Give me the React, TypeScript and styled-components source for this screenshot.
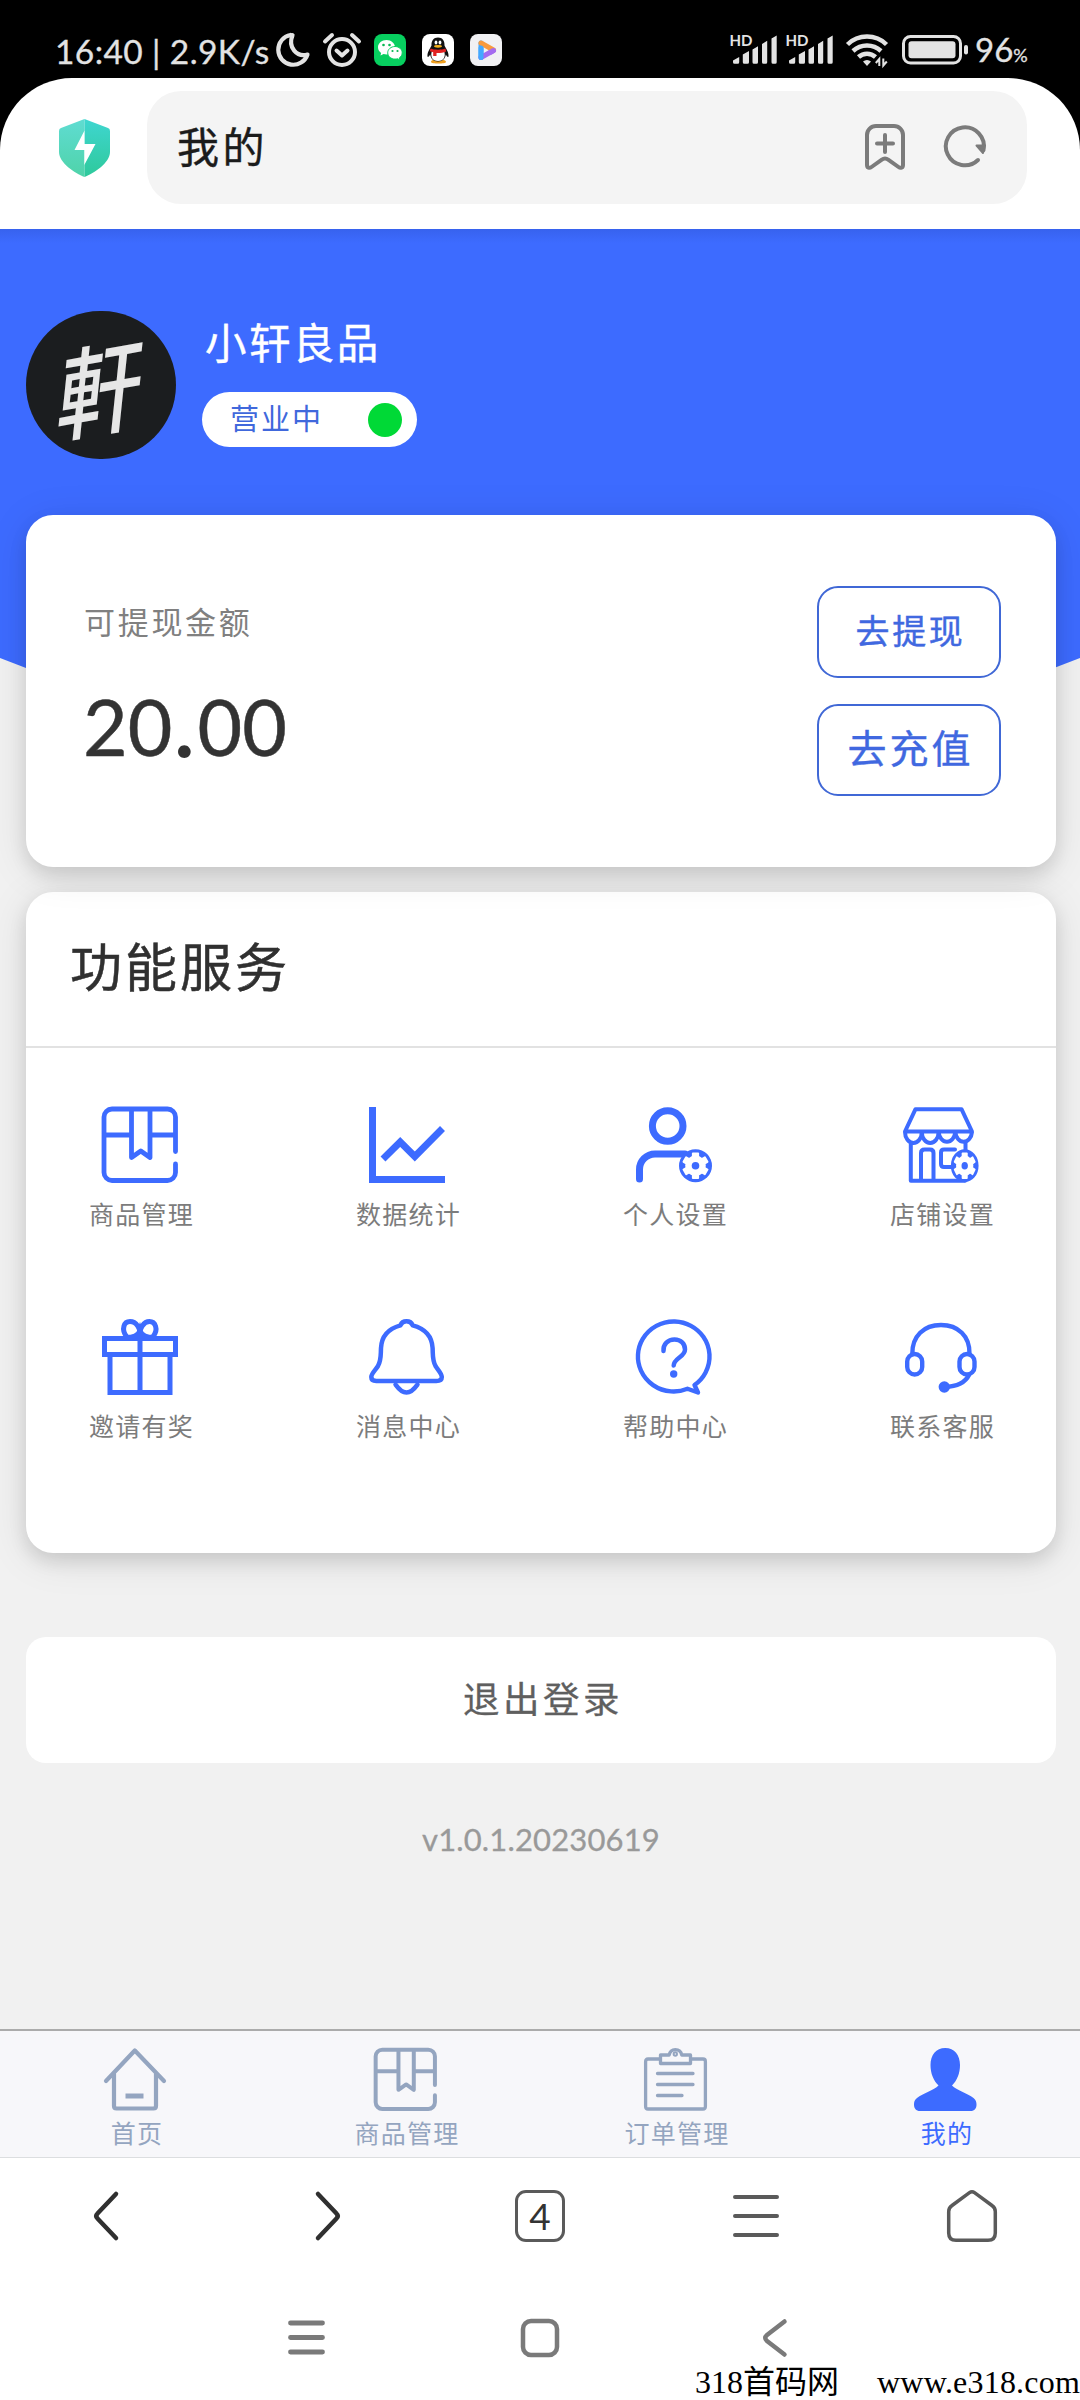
import React from "react";
import styled, { createGlobalStyle, css } from "styled-components";

const BLUE = "#3d6bff";
const MUTED = "#94a5c0";

const GlobalStyle = createGlobalStyle`
  * { box-sizing: border-box; }
  body {
    margin: 0;
    background: #f1f1f1;
    font-family: Lato, "Noto Sans CJK SC", sans-serif;
  }
  svg { display: block; flex: none; overflow: visible; }
`;

const Screen = styled.div`
  width: 1080px;
  height: 2400px;
  display: flex;
  flex-direction: column;
  overflow: hidden;
  background: #f1f1f1;
`;

/* Single-line text with fixed tracking and line box */
const tracked = (size: number, spacing: number, line: number) => css`
  font-size: ${size}px;
  letter-spacing: ${spacing}px;
  line-height: ${line}px;
  white-space: nowrap;
`;

/* ---------- System status bar ---------- */
const StatusBar = styled.div`
  height: 78px;
  flex: none;
  background: #000;
  color: #e3e3e3;
  display: flex;
  justify-content: space-between;
  padding: 30px 54px 8px 55px;
`;
const StatusGroup = styled.div<{ $gap: number }>`
  display: flex;
  align-items: center;
  gap: ${(p) => p.$gap}px;
  height: 40px;
`;
const StatusText = styled.span`
  ${tracked(33.5, 0.4, 40)}
  width: 218px;
  margin-right: 4px;
  padding-top: 1px;
  -webkit-text-stroke: 0.3px currentColor;
`;
const StatusSignal = styled.div<{ $after: number }>`
  display: flex;
  width: 46px;
  margin-right: ${(p) => p.$after}px;
`;
const BatteryText = styled.span`
  ${tracked(33, 0, 40)}
  width: 51px;
  margin-left: 7px;
  padding-top: 3px;
  -webkit-text-stroke: 0.3px currentColor;
  small { font-size: 18px; }
`;
const AppBadge = styled.div<{ $bg: string }>`
  width: 32px;
  height: 32px;
  border-radius: 8px;
  background: ${(p) => p.$bg};
`;

/* ---------- Browser header ---------- */
const HeaderBack = styled.div`
  background: #000;
  flex: none;
`;
const Header = styled.header`
  height: 151px;
  background: #fff;
  border-radius: 72px 72px 0 0;
  display: flex;
  align-items: flex-start;
  padding: 13px 53px 0 59px;
`;
const ShieldSlot = styled.div`
  width: 88px;
  padding-top: 28px;
`;
const AddressBar = styled.div`
  flex: 1;
  height: 113px;
  border-radius: 34px;
  background: #f4f4f4;
  display: flex;
  align-items: center;
  padding: 0 40px 2px 30px;
`;
const PageTitle = styled.div`
  ${tracked(42, 3.5, 60)}
  flex: 1;
  color: #1b1b1b;
  -webkit-text-stroke: 0.4px currentColor;
`;
const AddressIcons = styled.div`
  display: flex;
  gap: 39px;
`;

/* ---------- Store profile ---------- */
const Page = styled.main`
  height: 1800px;
  flex: none;
`;
const Hero = styled.section`
  height: 440px;
  margin-bottom: -154px;
  background: linear-gradient(#3762ee, ${BLUE} 14px);
  clip-path: polygon(0 0, 100% 0, 100% 429px, 1054px 439px, 26px 439px, 0 429px);
  display: flex;
  gap: 26px;
  padding: 82px 26px 0;
`;
const Avatar = styled.div`
  width: 150px;
  height: 148px;
  border-radius: 75px;
  background: #1b1d1f;
  display: flex;
  align-items: center;
  justify-content: center;
`;
const AvatarMark = styled.span`
  font-family: "Noto Sans CJK TC", sans-serif;
  font-size: 84px;
  font-weight: 500;
  line-height: 100px;
  color: #e6e6e6;
  transform: skew(-6deg, -10deg) scaleY(1.2);
`;
const StoreInfo = styled.div`
  display: flex;
  flex-direction: column;
  align-items: flex-start;
`;
const StoreName = styled.h1`
  ${tracked(41.5, 2.4, 60)}
  margin: 2px 0 19px 3px;
  font-weight: 400;
  color: #fff;
  -webkit-text-stroke: 0.4px currentColor;
`;
const OpenState = styled.div`
  width: 215px;
  height: 55px;
  border-radius: 28px;
  background: #fff;
  display: flex;
  align-items: center;
  justify-content: space-between;
  padding: 0 15px 0 28px;
  color: #4068dc;
  ${tracked(29, 2, 50)}
`;
const StateLabel = styled.span`
  padding-bottom: 2px;
`;
const StateDot = styled.i`
  width: 34px;
  height: 34px;
  border-radius: 50%;
  background: #00d936;
`;

/* ---------- Cards ---------- */
const cardBox = css`
  margin: 0 24px 0 26px;
  border-radius: 27px;
  background: #fff;
  box-shadow: 0 8px 18px rgba(0, 0, 0, 0.11), 0 6px 42px rgba(0, 0, 0, 0.1);
`;
const BalanceCard = styled.section`
  ${cardBox}
  position: relative;
  height: 352px;
  display: flex;
  justify-content: space-between;
  padding: 71px 55px 0 57px;
`;
const BalanceInfo = styled.div`
  padding-top: 11px;
`;
const BalanceLabel = styled.div`
  ${tracked(31, 2.7, 50)}
  margin-left: 1px;
  color: #808080;
`;
const BalanceAmount = styled.div`
  ${tracked(77, 0, 90)}
  margin-top: 34px;
  color: #333;
  -webkit-text-stroke: 0.5px currentColor;
`;
const AmountPoint = styled.span`
  letter-spacing: 4px;
  margin-left: 3px;
  -webkit-text-stroke: 3px currentColor;
`;
const ButtonColumn = styled.div`
  display: flex;
  flex-direction: column;
  gap: 26px;
`;
const OutlineButton = styled.button<{ $large?: boolean }>`
  width: 184px;
  height: 92px;
  padding: 0 0 ${(p) => (p.$large ? 5 : 3)}px;
  border: 2px solid #4068d6;
  border-radius: 21px;
  background: #fff;
  color: #4068e0;
  font-family: inherit;
  ${(p) => (p.$large ? tracked(39, 3, 80) : tracked(34, 2.6, 80))}
  text-indent: 3px;
  -webkit-text-stroke: 0.4px currentColor;
`;
const ServiceCard = styled.section`
  ${cardBox}
  margin-top: 25px;
  height: 661px;
`;
const ServiceTitle = styled.h2`
  ${tracked(52, 3, 80)}
  height: 156px;
  margin: 0;
  padding: 35px 0 0 44px;
  border-bottom: 2px solid #e2e2e2;
  font-weight: 400;
  color: #303030;
  -webkit-text-stroke: 0.5px currentColor;
`;
const ServiceGrid = styled.div`
  display: grid;
  grid-template-columns: repeat(4, 267px);
  grid-auto-rows: 212px;
  width: 1030px;
  padding-top: 59px;
  margin-left: -19.5px;
`;
const ServiceItem = styled.div`
  display: flex;
  flex-direction: column;
  align-items: center;
`;
const ServiceLabel = styled.div`
  ${tracked(25, 1.2, 36)}
  margin-top: 13px;
  text-indent: 3px;
  color: #7c7c7c;
`;
const LogoutButton = styled.button`
  display: block;
  width: 1030px;
  height: 126px;
  margin: 84px 0 0 26px;
  padding: 0 0 3px;
  border: 0;
  border-radius: 20px;
  background: #fff;
  color: #5f5f5f;
  font-family: inherit;
  ${tracked(36.5, 3.5, 100)}
  text-indent: 4px;
  -webkit-text-stroke: 0.3px currentColor;
`;
const Version = styled.div`
  ${tracked(31, 0.15, 40)}
  margin-top: 56px;
  text-align: center;
  text-indent: 2px;
  color: #999;
  -webkit-text-stroke: 0.3px currentColor;
`;

/* ---------- App tab bar ---------- */
const TabBar = styled.nav`
  height: 129px;
  flex: none;
  border-top: 2px solid #ababab;
  border-bottom: 1px solid #dcdee0;
  background: #f7f7fa;
  display: flex;
`;
const Tab = styled.div<{ $active?: boolean }>`
  flex: 1;
  display: flex;
  flex-direction: column;
  align-items: center;
  padding-top: 17px;
  color: ${(p) => (p.$active ? BLUE : MUTED)};
`;
const TabLabel = styled.div`
  ${tracked(25, 1.2, 36)}
  margin-top: 4px;
  text-indent: 4px;
`;

/* ---------- Browser and system navigation ---------- */
const BrowserBar = styled.nav`
  height: 118px;
  flex: none;
  background: #fff;
  display: grid;
  grid-template-columns: repeat(5, 216px);
  padding-bottom: 3px;
`;
const BrowserAction = styled.div<{ $before?: number; $after?: number }>`
  display: flex;
  align-items: center;
  justify-content: center;
  padding: 0 ${(p) => p.$after ?? 0}px 0 ${(p) => p.$before ?? 0}px;
`;
const TabCount = styled.div`
  width: 50px;
  height: 52px;
  border: 3px solid #5a5a5a;
  border-radius: 11px;
  display: flex;
  justify-content: center;
  font-size: 37px;
  line-height: 46px;
  color: #333;
`;
const SystemNav = styled.nav`
  height: 90px;
  flex: none;
  background: #fff;
  display: flex;
  align-items: center;
  padding: 33px 0 0 288px;
`;
const SystemHomeSlot = styled.div`
  margin: 0 204px 0 196px;
`;
const Footer = styled.footer`
  height: 34px;
  flex: none;
  background: #fff;
  color: #000;
  display: flex;
  justify-content: space-between;
  padding-left: 695px;
  font-family: "Liberation Serif", "Noto Sans CJK SC", serif;
  font-size: 32px;
  line-height: 32px;
  white-space: nowrap;
`;
const SiteUrl = styled.span`
  letter-spacing: 0.2px;
`;

/* ---------- Icons ---------- */
const stroke = (w: number) =>
  ({ fill: "none", stroke: "currentColor", strokeWidth: w, strokeLinecap: "round", strokeLinejoin: "round" }) as const;

const Moon = () => (
  <svg width="33" height="34" viewBox="0 0 33 34" {...stroke(4.2)}>
    <path d="M13.5 2A15 15 0 1 0 30.5 21.5C20 24.5 10.5 14.5 15.5 2.2" />
  </svg>
);
const Alarm = () => (
  <svg width="38" height="34" viewBox="0 0 38 34" {...stroke(4)}>
    <circle cx="19" cy="19" r="13" />
    <path d="m13.5 17.5 5.5 5 5.5-5M2 8.5 9 2M36 8.5 29 2" />
  </svg>
);
const WeChat = () => (
  <svg width="32" height="32" viewBox="0 0 32 32">
    <path d="M12.5 6C7.800 6 4 9.200 4 13.300c0 2.300 1.200 4.200 3.100 5.600L6.500 21.500l3-1.500c1 .3 2 .4 3 .4C17 20.400 21 17.300 21 13.300S17.200 6 12.500 6Z" fill="#fff" />
    <path d="M21 12.500c-4 0-7.300 2.800-7.300 6.300s3.200 6.300 7.300 6.300c.9 0 1.700-.1 2.500-.4l2.500 1.300-.6-2.200c1.700-1.200 2.800-3 2.800-5 0-3.500-3.200-6.300-7.200-6.300Z" fill="#fff" stroke="#07cf5f" />
    <g fill="#07b853"><circle cx="9.500" cy="11" r="1.300" /><circle cx="15.500" cy="11" r="1.300" /><circle cx="18.500" cy="17" r="1.100" /><circle cx="23.500" cy="17" r="1.100" /></g>
  </svg>
);
const Penguin = () => (
  <svg width="32" height="32" viewBox="0 0 32 32">
    <path d="M9 28c0-2 3-2.500 7-2.500s8 .5 8 2.500-15 2-15 0Z" fill="#f0a020" />
    <path d="M16 3.500c-4.500 0-6.700 3.300-6.500 8-1.500 3-4.500 7-4 11 .3 1 1.700 0 2.700-2 .5 4 3 7 7.800 7s7.300-3 7.800-7c1 2 2.400 3 2.700 2 .5-4-2.500-8-4-11 .2-4.700-2-8-6.500-8Z" fill="#111" />
    <path d="M10 17h12c2 5 0 10-6 10s-8-5-6-10Z" fill="#fff" />
    <path d="M8.500 14.500c4 1.600 11 1.600 15 0l.7 3c-3 1.200-6.200 1.600-9.700 1.500V22h-3.300v-3.800l-3.500-.9Z" fill="#e02222" />
    <ellipse cx="14" cy="8.500" rx="1.400" ry="2" fill="#fff" /><ellipse cx="18" cy="8.500" rx="1.400" ry="2" fill="#fff" />
    <ellipse cx="16" cy="12.300" rx="4" ry="1.400" fill="#f5b21b" />
  </svg>
);
const PlayMark = () => (
  <svg width="32" height="32" viewBox="0 0 32 32" fill="none" strokeWidth="5" strokeLinejoin="round" strokeLinecap="round">
    <path d="M11 23.500V9" stroke="#43a8ff" />
    <path d="M11 23.500 23.500 16.500" stroke="#a46bf0" />
    <path d="M11 9l12.500 7" stroke="#f89a3c" />
    <path d="M20.500 18.200l3-1.700" stroke="#a46bf0" />
    <path d="M11 23.500V14" stroke="#43a8ff" />
  </svg>
);
const Signal = () => (
  <svg width="46" height="30" viewBox="0 0 46 30" fill="#e3e3e3">
    <text x="-1.500" y="11" fontFamily="Lato, sans-serif" fontSize="15.500" fontWeight="700" textLength="23" lengthAdjust="spacingAndGlyphs">HD</text>
    <path d="M2 25.500 8.200 22v5.300a1.500 1.500 0 0 1-1.500 1.500H3.500A1.500 1.500 0 0 1 2 27.300ZM11.800 19.500 18 16v11.300a1.500 1.500 0 0 1-1.500 1.500h-3.200a1.500 1.500 0 0 1-1.500-1.500ZM21.500 14.500l5.500-3.300v16.100a1.500 1.500 0 0 1-1.500 1.500H23a1.500 1.500 0 0 1-1.500-1.500ZM31 9l5.200-3.200v21.500a1.500 1.500 0 0 1-1.500 1.500h-2.200a1.500 1.500 0 0 1-1.500-1.500ZM40.500 3.500 45.700.5v26.800a1.500 1.500 0 0 1-1.500 1.500H42a1.500 1.500 0 0 1-1.500-1.500Z" />
  </svg>
);
const Wifi = () => (
  <svg width="42" height="33" viewBox="0 0 42 33" fill="none" stroke="currentColor" strokeWidth="4.500">
    <path d="M1.500 10.500a28 28 0 0 1 39 0" /><path d="M7 17a20.500 20.500 0 0 1 28 0" /><path d="M12.500 23a12.500 12.500 0 0 1 17 0" />
    <path d="M17 27.500a6 6 0 0 1 8 0L21 32Z" fill="currentColor" stroke="none" />
    <path d="M33.300 32v-7l-3.500 4M37.300 24.500v7l3.500-4" strokeWidth="2" />
  </svg>
);
const Battery = () => (
  <svg width="66" height="30" viewBox="0 0 66 30">
    <rect x="1.500" y="1.500" width="57" height="26.500" rx="7" fill="none" stroke="#e3e3e3" strokeWidth="3" />
    <rect x="6.500" y="6.200" width="47" height="17" rx="3" fill="#e3e3e3" />
    <rect x="62" y="10" width="4" height="9.500" rx="2" fill="#e3e3e3" />
  </svg>
);
const Shield = () => (
  <svg width="51" height="58" viewBox="0 0 51 58">
    <defs>
      <linearGradient id="shieldL" x1="0" y1="0" x2="0" y2="1"><stop offset="0" stopColor="#5fdcd2" /><stop offset="1" stopColor="#4fd3a9" /></linearGradient>
      <linearGradient id="shieldR" x1="0" y1="0" x2="0" y2="1"><stop offset="0" stopColor="#3fd6d0" /><stop offset="1" stopColor="#2ec99b" /></linearGradient>
    </defs>
    <path d="M25.500 0 2 9Q0 9.500 0 12v21C0 44 16 54 25.500 58Z" fill="url(#shieldL)" />
    <path d="M25.500 0 49 9q2 .5 2 3v21c0 11-16 21-25.500 25Z" fill="url(#shieldR)" />
    <path d="M25.500 11.500 15.500 31h9.800v15L36.500 25H25.500Z" fill="#fff" />
  </svg>
);
const BookmarkAdd = () => (
  <svg width="40" height="46" viewBox="0 0 40 46" {...stroke(4)} stroke="#7b7b7b">
    <path d="M11 2h18a9 9 0 0 1 9 9v30c0 3-2.500 3.500-4.500 2l-10-7.200a6 6 0 0 0-7 0L6.500 43C4.500 44.500 2 44 2 41V11a9 9 0 0 1 9-9Z" />
    <path d="M12 19.500h16M20 11v17" />
  </svg>
);
const Refresh = () => (
  <svg width="43" height="43" viewBox="0 0 43 43" {...stroke(4)} stroke="#7b7b7b">
    <path d="M34 36A19 19 0 1 1 39.500 26" />
    <path d="M32.500 21.500h8.500L39 29Z" fill="#7b7b7b" strokeWidth="2" />
  </svg>
);

const Package = ({ size, w }: { size: number; w: number }) => (
  <svg width={size} height={size} viewBox="0 0 76 76" {...stroke(w)}>
    <path d="M73.500 44.500V10a8 8 0 0 0-8-8H10a8 8 0 0 0-8 8v55.500a8 8 0 0 0 8 8h55.500a8 8 0 0 0 8-8V57M2 28h27.500M48 28h25.500M29.500 2v48.500l9.300-6.500 9.200 6.500V2" />
  </svg>
);
const LineChart = () => (
  <svg width="76" height="76" viewBox="0 0 76 76" fill="none" stroke="currentColor" strokeWidth="7">
    <path d="M3.500 0v72.500H76M14 52l17.200-17 14.600 14.500L73.500 21.500" />
  </svg>
);
const Gear = ({ x, y, sx = 1 }: { x: number; y: number; sx?: number }) => (
  <g transform={`translate(${x} ${y}) scale(${sx} 1)`} stroke="none">
    <circle r="16.500" fill="currentColor" />
    <circle r="10.300" fill="#fff" />
    {[0, 60, 120].map((a) => (
      <rect key={a} x="-3.600" y="-13.300" width="7.200" height="26.600" rx="1" fill="#fff" transform={`rotate(${a})`} />
    ))}
    <circle r="3.800" fill="currentColor" />
  </g>
);
const UserSettings = () => (
  <svg width="76" height="76" viewBox="0 0 76 76" {...stroke(7)}>
    <circle cx="31.700" cy="19" r="15.300" />
    <path d="M3.500 72V62.500A15.500 15.500 0 0 1 19 47h30" />
    <Gear x={59.5} y={58.700} />
  </svg>
);
const StoreSettings = () => (
  <svg width="76" height="76" viewBox="0 0 76 76" {...stroke(4)}>
    <path d="M2 24.500 12.500 2.200h46L69 24.500ZM2 25a8.400 11 0 0 0 16.800 0 8.400 11 0 0 0 16.800 0 8.400 11 0 0 0 16.700 0A8.400 11 0 0 0 69 25M7.800 36v37.700H62M62.500 36v8M18 73V46q0-3.500 3.500-3.500h5.500q3.500 0 3.500 3.500v27M52 42.500H41q-3 0-3 3V57q0 3 3 3h9" />
    <Gear x={61.7} y={58.700} sx={0.84} />
  </svg>
);
const Gift = () => (
  <svg width="76" height="76" viewBox="0 0 76 76" {...stroke(5)} strokeLinejoin="miter">
    <path d="M2.500 19.500h71v16h-71ZM8 36v37.500h60V36M38 19.500v54" />
    <path d="M38 17.500C39 9 34 2.500 28 2.500S19 10 24.500 17.500M38 17.500C37 9 42 2.500 47.500 2.500S57 10 51 17.500M24.500 17.500c6 2 12-1 13.500-6 1.500 5 7.500 8 13 6" />
  </svg>
);
const Bell = () => (
  <svg width="76" height="76" viewBox="0 0 76 76" {...stroke(4.500)}>
    <path d="M37.500 2.300c-3 0-5 1.200-6 4C20 9.500 12.500 17 12 29c-.4 8 .3 12-3 18C6.500 51 2.300 54.500 2.300 58c0 3 2 4 5 4h60c3.500 0 5.500-1 5.500-4 0-3.500-3.800-7-6.300-11-3.200-6-2.500-10-2.900-18-.6-12-8.100-19.500-20-22.700-1-2.800-3-4-6.100-4Z" />
    <path d="M26.500 65.500C29 69 32 73.500 37.500 73.500S46 69 48.500 65.500" />
  </svg>
);
const Help = () => (
  <svg width="76" height="76" viewBox="0 0 76 76" {...stroke(4.400)}>
    <path d="M58.500 66A35.800 35 0 1 0 51.500 69.800L62 73.500Z" />
    <path d="M27.500 32C27 25 32 20.500 38.500 20.500S49 25 49 30.500C49 38 38 39 37.700 46.500" strokeWidth="4.500" />
    <circle cx="37.700" cy="55" r="3.700" fill="currentColor" stroke="none" />
  </svg>
);
const Headset = () => (
  <svg width="76" height="76" viewBox="0 0 76 76" {...stroke(4.400)}>
    <path d="M9.300 35C9 17 21 6 38 6s29 11 28.500 29M66 56c-4 8-12 11.500-24 12" />
    <rect x="4.200" y="35" width="15" height="20.500" rx="7.500" />
    <rect x="56.500" y="35" width="15" height="20.500" rx="7.500" />
    <circle cx="41.300" cy="68" r="5.700" fill="currentColor" stroke="none" />
  </svg>
);
const HomeTab = () => (
  <svg width="62" height="63" viewBox="0 0 62 63" {...stroke(4.200)}>
    <path d="M2 33 30.800 2.500 60 33M10 26v32q0 2.500 2.500 2.500h37q2.500 0 2.500-2.500V26" />
    <path d="M21.500 48h18" strokeWidth="5" strokeLinecap="butt" />
  </svg>
);
const Clipboard = () => (
  <svg width="63" height="63" viewBox="0 0 63 63" {...stroke(3.300)}>
    <path d="M16 11H4q-2.400 0-2.400 2.500v45Q1.600 61 4 61h55q2.400 0 2.400-2.500v-45Q61.400 11 59 11H47" />
    <path d="M16.500 7h8.700C26 3 28 1.600 31.300 1.600S37 3 37.700 7h8.800v8.500h-30ZM13.500 25.500H49M13.500 36.500H49M13.500 47.500H38" />
    <circle cx="31.300" cy="6" r="1" />
  </svg>
);
const Person = () => (
  <svg width="63" height="63" viewBox="0 0 63 63" fill="currentColor">
    <path d="M31.200 0C22 0 16.500 7 16.500 17c0 8.500 3 15.500 8 20.500C20 42 9 45.500 3 50c-2.500 2-3 4-3 6.500C0 60.500 2 63 6 63h50.500c4 0 6-2.500 6-6.500 0-2.500-.6-4.500-3-6.500-6-4.500-17-8-21.500-12.500 5-5 8-12 8-20.500C46 7 40.500 0 31.200 0Z" />
  </svg>
);
const Chevron = ({ flip }: { flip?: boolean }) => (
  <svg width="24" height="48" viewBox="0 0 24 48" {...stroke(4.500)} stroke="#303030">
    <path d={flip ? "M2 2 20.500 21.500q2.500 2.500 0 5L2 46" : "M22 2 3.500 21.500q-2.500 2.500 0 5L22 46"} />
  </svg>
);
const BrowserMenu = () => (
  <svg width="46" height="42" viewBox="0 0 46 42" {...stroke(4)} stroke="#5a5a5a">
    <path d="M2 2h42M2 21h42M2 40h42" />
  </svg>
);
const BrowserHome = () => (
  <svg width="50" height="52" viewBox="0 0 50 52" {...stroke(3.500)} stroke="#5a5a5a">
    <path d="M22.500 2.700 5 15.500q-3.300 2.300-3.300 6V43q0 7.300 7.300 7.300h32q7.300 0 7.300-7.300V21.500q0-3.700-3.300-6L27.500 2.700q-2.500-1.800-5 0Z" />
  </svg>
);
const SysMenu = () => (
  <svg width="37" height="35" viewBox="0 0 37 35" {...stroke(4.800)} stroke="#7a7a7a">
    <path d="M2.500 3h32M2.500 17.500h32M2.500 32h32" />
  </svg>
);
const SysHome = () => (
  <svg width="38" height="38" viewBox="0 0 38 38" {...stroke(4.500)} stroke="#7a7a7a">
    <rect x="2" y="2" width="34" height="34" rx="8" />
  </svg>
);
const SysBack = () => (
  <svg width="24" height="38" viewBox="0 0 24 38" {...stroke(4.500)} stroke="#7a7a7a">
    <path d="M21.500 2.500 4 16q-3.500 3 0 6l17.500 13.500" />
  </svg>
);

const services = [
  { label: "商品管理", icon: <Package size={76} w={4.800} /> },
  { label: "数据统计", icon: <LineChart /> },
  { label: "个人设置", icon: <UserSettings /> },
  { label: "店铺设置", icon: <StoreSettings /> },
  { label: "邀请有奖", icon: <Gift /> },
  { label: "消息中心", icon: <Bell /> },
  { label: "帮助中心", icon: <Help /> },
  { label: "联系客服", icon: <Headset /> },
];

const tabs = [
  { label: "首页", icon: <HomeTab /> },
  { label: "商品管理", icon: <Package size={63} w={4.800} /> },
  { label: "订单管理", icon: <Clipboard /> },
  { label: "我的", icon: <Person />, active: true },
];

const IconTint = styled.div`
  color: ${BLUE};
`;

export default function App() {
  return (
    <Screen>
      <GlobalStyle />
      <StatusBar>
        <StatusGroup $gap={13}>
          <StatusGroup $gap={0}>
            <StatusText>16:40 | 2.9K/s</StatusText>
            <Moon />
          </StatusGroup>
          <Alarm />
          <StatusGroup $gap={16}>
            <AppBadge $bg="#07cf5f"><WeChat /></AppBadge>
            <AppBadge $bg="#fff"><Penguin /></AppBadge>
            <AppBadge $bg="#f1f1f3"><PlayMark /></AppBadge>
          </StatusGroup>
        </StatusGroup>
        <StatusGroup $gap={0}>
          <StatusSignal $after={10}><Signal /></StatusSignal>
          <StatusSignal $after={13}><Signal /></StatusSignal>
          <StatusGroup $gap={14}>
            <Wifi />
            <Battery />
          </StatusGroup>
          <BatteryText>96<small>%</small></BatteryText>
        </StatusGroup>
      </StatusBar>

      <HeaderBack>
        <Header>
          <ShieldSlot><Shield /></ShieldSlot>
          <AddressBar>
            <PageTitle>我的</PageTitle>
            <AddressIcons><BookmarkAdd /><Refresh /></AddressIcons>
          </AddressBar>
        </Header>
      </HeaderBack>

      <Page>
        <Hero>
          <Avatar><AvatarMark>軒</AvatarMark></Avatar>
          <StoreInfo>
            <StoreName>小轩良品</StoreName>
            <OpenState><StateLabel>营业中</StateLabel><StateDot /></OpenState>
          </StoreInfo>
        </Hero>

        <BalanceCard>
          <BalanceInfo>
            <BalanceLabel>可提现金额</BalanceLabel>
            <BalanceAmount>20<AmountPoint>.</AmountPoint>00</BalanceAmount>
          </BalanceInfo>
          <ButtonColumn>
            <OutlineButton>去提现</OutlineButton>
            <OutlineButton $large>去充值</OutlineButton>
          </ButtonColumn>
        </BalanceCard>

        <ServiceCard>
          <ServiceTitle>功能服务</ServiceTitle>
          <ServiceGrid>
            {services.map((s) => (
              <ServiceItem key={s.label}>
                <IconTint>{s.icon}</IconTint>
                <ServiceLabel>{s.label}</ServiceLabel>
              </ServiceItem>
            ))}
          </ServiceGrid>
        </ServiceCard>

        <LogoutButton>退出登录</LogoutButton>
        <Version>v1.0.1.20230619</Version>
      </Page>

      <TabBar>
        {tabs.map((t) => (
          <Tab key={t.label} $active={t.active}>
            {t.icon}
            <TabLabel>{t.label}</TabLabel>
          </Tab>
        ))}
      </TabBar>

      <BrowserBar>
        <BrowserAction $after={4}><Chevron /></BrowserAction>
        <BrowserAction $before={8}><Chevron flip /></BrowserAction>
        <BrowserAction><TabCount>4</TabCount></BrowserAction>
        <BrowserAction><BrowserMenu /></BrowserAction>
        <BrowserAction><BrowserHome /></BrowserAction>
      </BrowserBar>

      <SystemNav>
        <SysMenu />
        <SystemHomeSlot><SysHome /></SystemHomeSlot>
        <SysBack />
      </SystemNav>
      <Footer>
        <span>318首码网</span>
        <SiteUrl>www.e318.com</SiteUrl>
      </Footer>
    </Screen>
  );
}
